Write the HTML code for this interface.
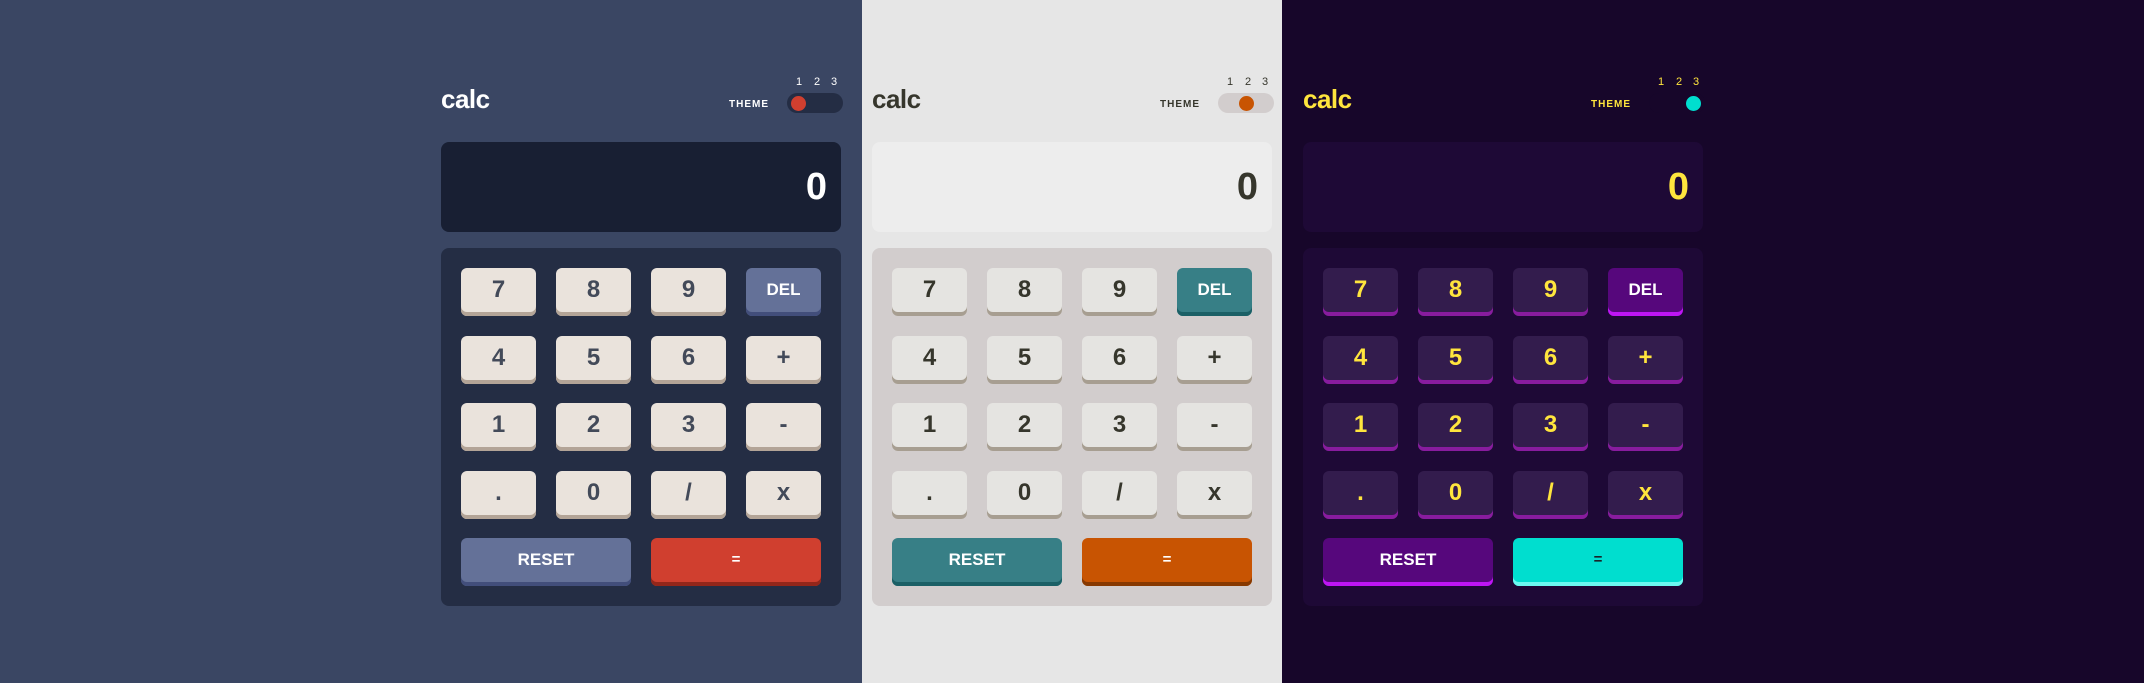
<!DOCTYPE html>
<html><head><meta charset="utf-8"><style>
*{margin:0;padding:0;box-sizing:border-box}
body{width:2144px;height:683px;position:relative;overflow:hidden;font-family:"Liberation Sans",sans-serif;font-weight:bold}
.p{position:absolute;top:0;height:683px}
.c{position:absolute;top:0;width:400px;height:683px}
.logo{position:absolute;left:0;top:84px;font-size:26px;letter-spacing:-0.5px}
.nums{position:absolute;top:76px;font-size:11px;font-weight:normal}
.nums span{position:absolute;width:10px;text-align:center}
.th{position:absolute;left:288px;top:99px;font-size:10px;letter-spacing:1px}
.tg{position:absolute;left:346px;top:93px;width:56px;height:20px;border-radius:10px}
.kn{position:absolute;top:3px;width:15px;height:15px;border-radius:50%}
.d{position:absolute;left:0;top:142px;width:400px;height:90px;border-radius:8px;text-align:right;padding-right:14px;font-size:38px;line-height:90px}
.kp{position:absolute;left:0;top:248px;width:400px;height:358px;border-radius:8px}
.k{position:absolute;width:75px;height:48px;border-radius:6px;text-align:center;line-height:44px;font-size:24px}
.k.s{font-size:17px}
.k.w{width:170px;font-size:17px}
.t1 .p{background:#3a4663}.t1 .logo,.t1 .nums,.t1 .th,.t1 .d{color:#fff}
.t1 .tg,.t1 .kp{background:#242d44}.t1 .kn{background:#d03f2f;left:4px}.t1 .d{background:#181f33}
.t1 .k{background:#eae3dc;color:#434a59;box-shadow:inset 0 -4px #b3a497}
.t1 .k.a{background:#647198;color:#fff;box-shadow:inset 0 -4px #424e7b}
.t1 .k.e{background:#d03f2f;color:#fff;box-shadow:inset 0 -4px #93261a}
.t2 .p{background:#e6e6e6}.t2 .logo,.t2 .nums,.t2 .th,.t2 .d{color:#36362c}
.t2 .tg,.t2 .kp{background:#d2cdcd}.t2 .kn{background:#c85402;left:21px}.t2 .d{background:#ededed}
.t2 .k{background:#e5e4e1;color:#36362c;box-shadow:inset 0 -4px #a79e91}
.t2 .k.a{background:#377f86;color:#fff;box-shadow:inset 0 -4px #1b6066}
.t2 .k.e{background:#c85402;color:#fff;box-shadow:inset 0 -4px #873901}
.t3 .p{background:#17062a}.t3 .logo,.t3 .nums,.t3 .th,.t3 .d{color:#ffe53d}
.t3 .tg{background:#17062a}.t3 .kp,.t3 .d{background:#1e0936}.t3 .kn{background:#00decf;left:37px}
.t3 .k{background:#331c4d;color:#ffe53d;box-shadow:inset 0 -4px #881c9e}
.t3 .k.a{background:#56077c;color:#fff;box-shadow:inset 0 -4px #be15f4}
.t3 .k.e{background:#00decf;color:#1a2327;box-shadow:inset 0 -4px #6cf9f1}
.k.eq{font-size:15px}
</style></head><body>
<div class="t1"><div class="p" style="left:0;width:862px"></div>
<div class="c" style="left:441px">
<div class="logo">calc</div>
<div class="nums"><span style="left:353px">1</span><span style="left:371px">2</span><span style="left:388px">3</span></div>
<div class="th">THEME</div><div class="tg"><div class="kn"></div></div>
<div class="d">0</div>
<div class="kp">
<div class="k" style="left:20px;top:20px">7</div><div class="k" style="left:115px;top:20px">8</div><div class="k" style="left:210px;top:20px">9</div><div class="k a s" style="left:305px;top:20px">DEL</div>
<div class="k" style="left:20px;top:88px">4</div><div class="k" style="left:115px;top:88px">5</div><div class="k" style="left:210px;top:88px">6</div><div class="k" style="left:305px;top:88px">+</div>
<div class="k" style="left:20px;top:155px">1</div><div class="k" style="left:115px;top:155px">2</div><div class="k" style="left:210px;top:155px">3</div><div class="k" style="left:305px;top:155px">-</div>
<div class="k" style="left:20px;top:223px">.</div><div class="k" style="left:115px;top:223px">0</div><div class="k" style="left:210px;top:223px">/</div><div class="k" style="left:305px;top:223px">x</div>
<div class="k w a" style="left:20px;top:290px">RESET</div><div class="k w e eq" style="left:210px;top:290px">=</div>
</div></div></div>
<div class="t2"><div class="p" style="left:862px;width:420px"></div>
<div class="c" style="left:872px">
<div class="logo">calc</div>
<div class="nums"><span style="left:353px">1</span><span style="left:371px">2</span><span style="left:388px">3</span></div>
<div class="th">THEME</div><div class="tg"><div class="kn"></div></div>
<div class="d">0</div>
<div class="kp">
<div class="k" style="left:20px;top:20px">7</div><div class="k" style="left:115px;top:20px">8</div><div class="k" style="left:210px;top:20px">9</div><div class="k a s" style="left:305px;top:20px">DEL</div>
<div class="k" style="left:20px;top:88px">4</div><div class="k" style="left:115px;top:88px">5</div><div class="k" style="left:210px;top:88px">6</div><div class="k" style="left:305px;top:88px">+</div>
<div class="k" style="left:20px;top:155px">1</div><div class="k" style="left:115px;top:155px">2</div><div class="k" style="left:210px;top:155px">3</div><div class="k" style="left:305px;top:155px">-</div>
<div class="k" style="left:20px;top:223px">.</div><div class="k" style="left:115px;top:223px">0</div><div class="k" style="left:210px;top:223px">/</div><div class="k" style="left:305px;top:223px">x</div>
<div class="k w a" style="left:20px;top:290px">RESET</div><div class="k w e eq" style="left:210px;top:290px">=</div>
</div></div></div>
<div class="t3"><div class="p" style="left:1282px;width:862px"></div>
<div class="c" style="left:1303px">
<div class="logo">calc</div>
<div class="nums"><span style="left:353px">1</span><span style="left:371px">2</span><span style="left:388px">3</span></div>
<div class="th">THEME</div><div class="tg"><div class="kn"></div></div>
<div class="d">0</div>
<div class="kp">
<div class="k" style="left:20px;top:20px">7</div><div class="k" style="left:115px;top:20px">8</div><div class="k" style="left:210px;top:20px">9</div><div class="k a s" style="left:305px;top:20px">DEL</div>
<div class="k" style="left:20px;top:88px">4</div><div class="k" style="left:115px;top:88px">5</div><div class="k" style="left:210px;top:88px">6</div><div class="k" style="left:305px;top:88px">+</div>
<div class="k" style="left:20px;top:155px">1</div><div class="k" style="left:115px;top:155px">2</div><div class="k" style="left:210px;top:155px">3</div><div class="k" style="left:305px;top:155px">-</div>
<div class="k" style="left:20px;top:223px">.</div><div class="k" style="left:115px;top:223px">0</div><div class="k" style="left:210px;top:223px">/</div><div class="k" style="left:305px;top:223px">x</div>
<div class="k w a" style="left:20px;top:290px">RESET</div><div class="k w e eq" style="left:210px;top:290px">=</div>
</div></div></div>
</body></html>
